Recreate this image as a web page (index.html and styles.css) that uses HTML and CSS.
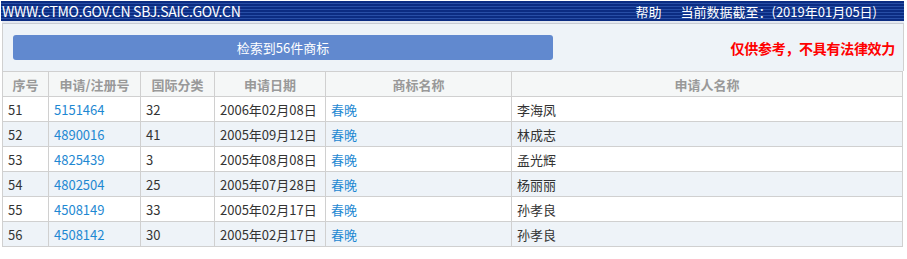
FILE: index.html
```html
<!DOCTYPE html>
<html lang="zh-CN">
<head>
<meta charset="utf-8">
<title>商标检索</title>
<link rel="stylesheet" href="styles.css">
</head>
<body>
<div class="page">
  <div class="topbar">
    <span class="site">WWW.CTMO.GOV.CN SBJ.SAIC.GOV.CN</span>
    <span class="right"><span class="help">帮助</span><span class="date">当前数据截至：(2019年01月05日)</span></span>
  </div>
  <div class="sep"></div>
  <div class="panel">
    <div class="result-btn">检索到56件商标</div>
    <div class="notice">仅供参考，不具有法律效力</div>
  </div>
  <table class="grid">
    <colgroup>
      <col class="c1"><col class="c2"><col class="c3"><col class="c4"><col class="c5"><col class="c6">
    </colgroup>
    <thead>
      <tr><th>序号</th><th>申请/注册号</th><th>国际分类</th><th>申请日期</th><th>商标名称</th><th>申请人名称</th></tr>
    </thead>
    <tbody>
      <tr><td>51</td><td><a>5151464</a></td><td>32</td><td>2006年02月08日</td><td><a>春晚</a></td><td>李海凤</td></tr>
      <tr class="alt"><td>52</td><td><a>4890016</a></td><td>41</td><td>2005年09月12日</td><td><a>春晚</a></td><td>林成志</td></tr>
      <tr><td>53</td><td><a>4825439</a></td><td>3</td><td>2005年08月08日</td><td><a>春晚</a></td><td>孟光辉</td></tr>
      <tr class="alt"><td>54</td><td><a>4802504</a></td><td>25</td><td>2005年07月28日</td><td><a>春晚</a></td><td>杨丽丽</td></tr>
      <tr><td>55</td><td><a>4508149</a></td><td>33</td><td>2005年02月17日</td><td><a>春晚</a></td><td>孙孝良</td></tr>
      <tr class="alt"><td>56</td><td><a>4508142</a></td><td>30</td><td>2005年02月17日</td><td><a>春晚</a></td><td>孙孝良</td></tr>
    </tbody>
  </table>
</div>
</body>
</html>
```
FILE: styles.css
```css
html, body {
  margin: 0;
  padding: 0;
  background: #fff;
}
body {
  font-family: "Noto Sans CJK SC", "Noto Sans", sans-serif;
  font-size: 13px;
  color: #333;
}
.page {
  width: 902px;
  margin: 1px 0 0 2px;
}
.topbar {
  height: 20px;
  display: flex;
  align-items: center;
  justify-content: space-between;
  padding: 0 27px 0 1px;
  margin-left: -1px;
  color: #fff;
  font-size: 14px;
  background: repeating-linear-gradient(to bottom, #0b2c82 0, #0b2c82 2px, #274ea6 2px, #274ea6 3px);
}
.topbar .site {
  letter-spacing: -0.3px;
}
.topbar .right {
  display: flex;
  gap: 19px;
  font-size: 13px;
}
.sep {
  height: 2px;
  background: #e4e8f0;
  border-bottom: 1px solid #c7cbd3;
}
.panel {
  display: flex;
  align-items: center;
  justify-content: space-between;
  height: 47px;
  padding: 0 8px 0 10px;
  background: #eef3f8;
  border-left: 1px solid #d0d0d0;
  border-right: 1px solid #d0d0d0;
}
.result-btn {
  width: 540px;
  height: 25px;
  line-height: 25px;
  text-align: center;
  color: #fff;
  background: #6189cf;
  border-radius: 3px;
  font-size: 13px;
}
.notice {
  color: #f00;
  font-size: 14px;
  font-weight: bold;
  letter-spacing: -0.3px;
}
.grid {
  width: 901px;
  border-collapse: collapse;
  table-layout: fixed;
}
.grid .c1 { width: 46px; }
.grid .c2 { width: 92px; }
.grid .c3 { width: 74px; }
.grid .c4 { width: 111px; }
.grid .c5 { width: 186px; }
.grid .c6 { width: auto; }
.grid th, .grid td {
  border: 1px solid #d0d0d0;
  height: 24px;
  padding: 0 5px;
  white-space: nowrap;
  overflow: hidden;
}
.grid th {
  background: #f5f7f7;
  color: #999;
  font-weight: bold;
  text-align: center;
}
.grid td {
  text-align: left;
}
.grid tr.alt td {
  background: #eef3f8;
}
.grid a {
  color: #1e88d2;
  text-decoration: none;
}
```
